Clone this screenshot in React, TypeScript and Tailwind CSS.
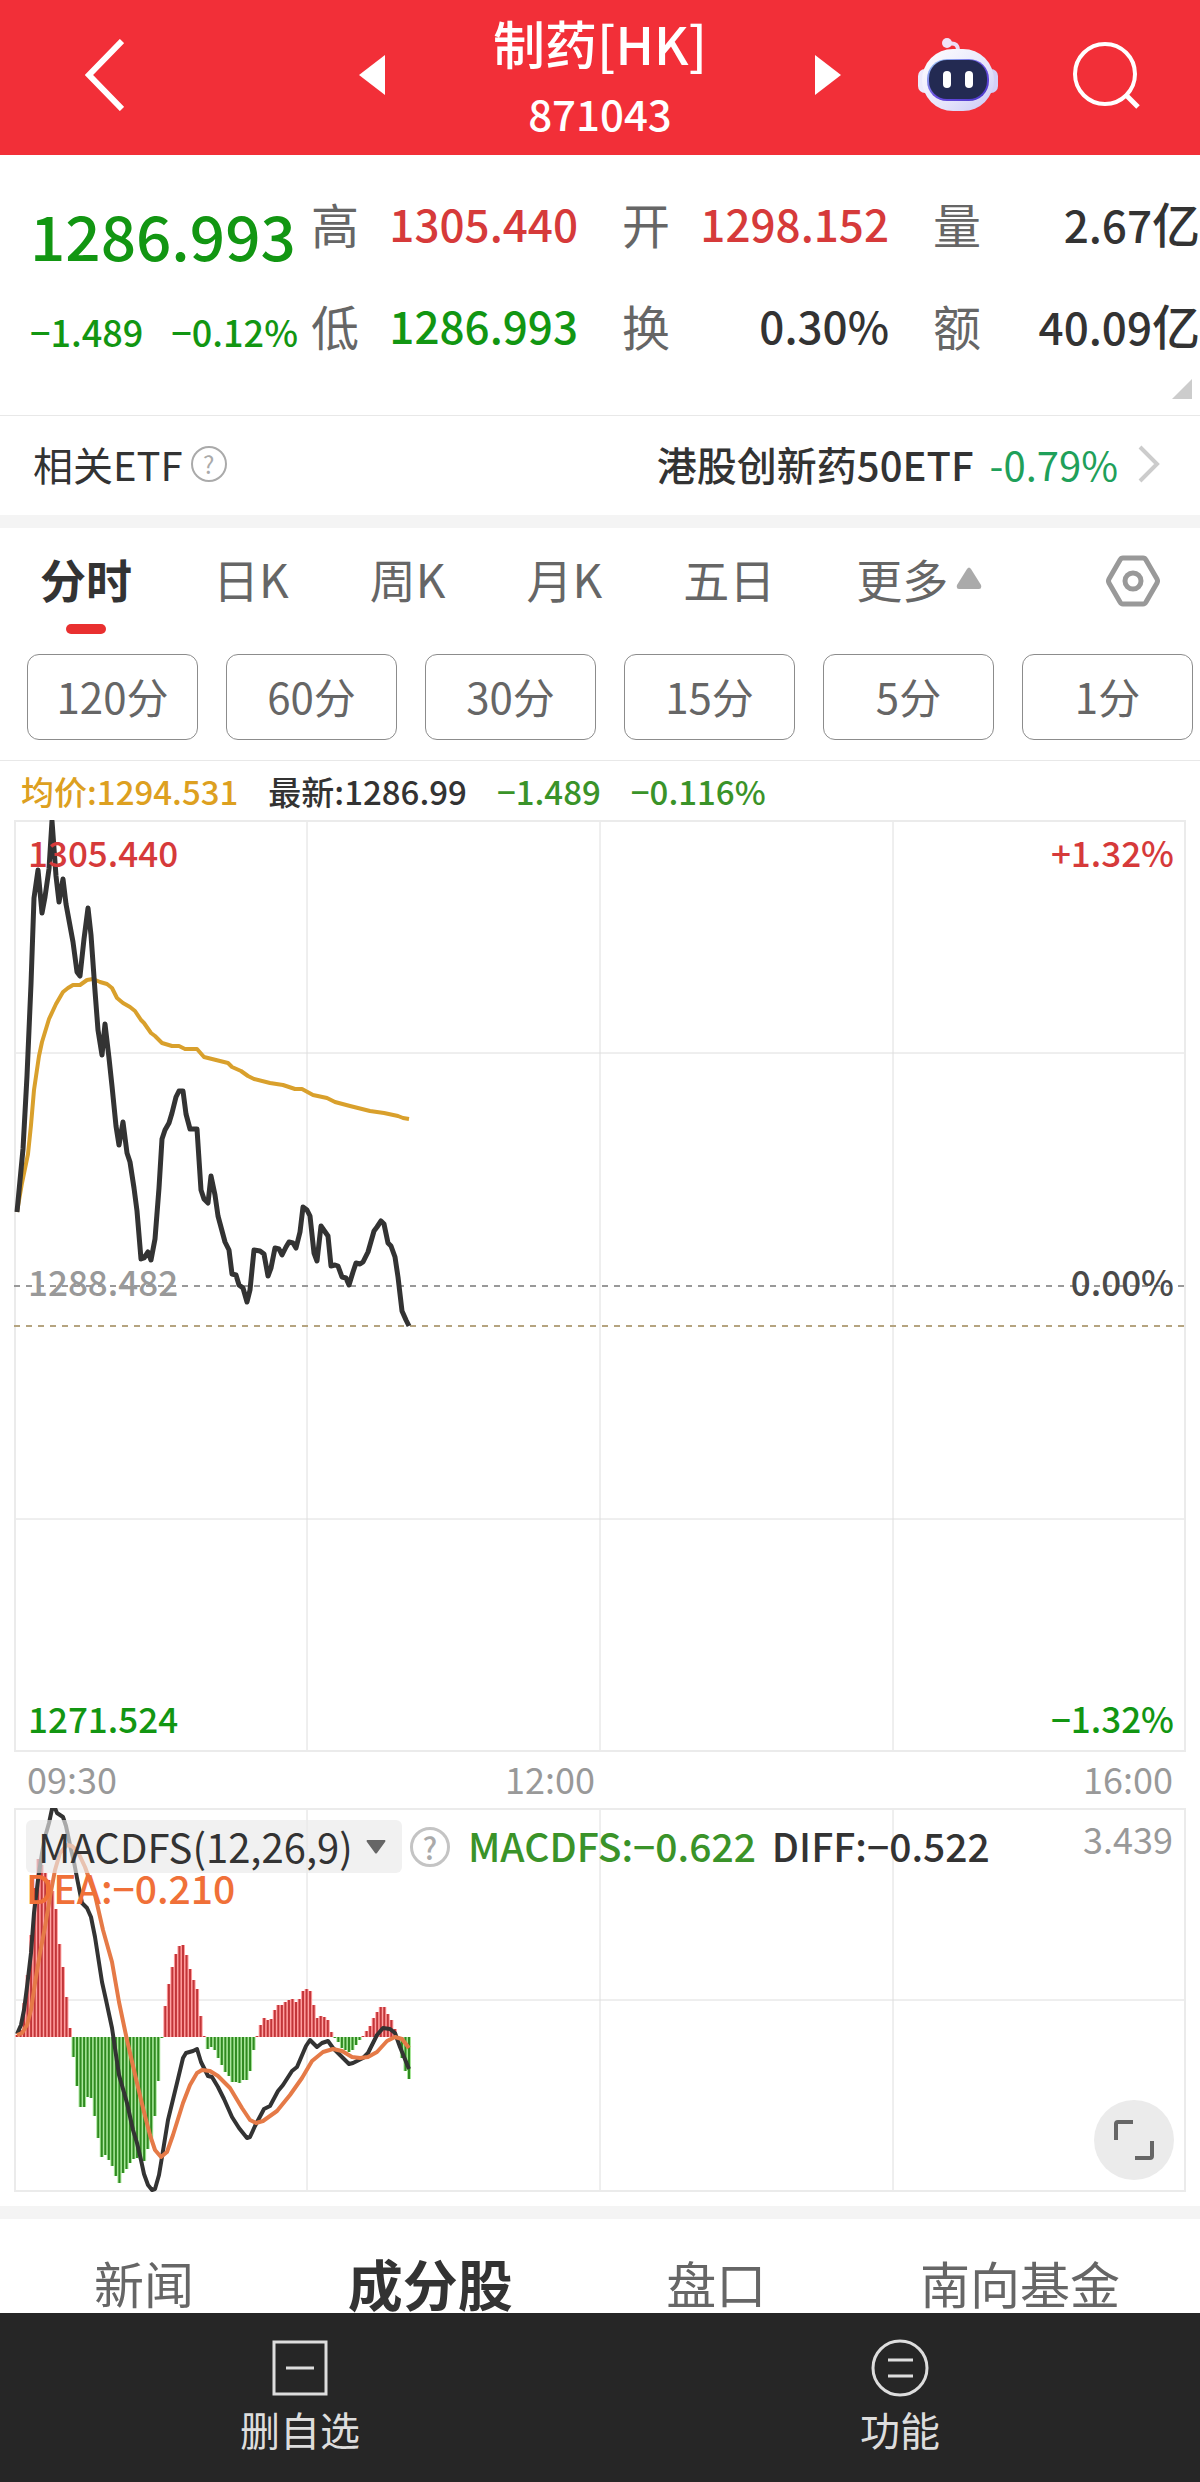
import React, { useState } from 'react'

interface Quote {
    label: string
    value: string
    unit?: string
    color: string
}

const quotes: Quote[] = [
    { label: '高', value: '1305.440', color: 'text-[#d63a3a]' },
    { label: '开', value: '1298.152', color: 'text-[#d63a3a]' },
    { label: '量', value: '2.67', unit: '亿', color: 'text-[#333333]' },
    { label: '低', value: '1286.993', color: 'text-[#129612]' },
    { label: '换', value: '0.30%', color: 'text-[#333333]' },
    { label: '额', value: '40.09', unit: '亿', color: 'text-[#333333]' },
]

const periods = ['分时', '日K', '周K', '月K', '五日']
const minutes = ['120分', '60分', '30分', '15分', '5分', '1分']
const sections = ['新闻', '成分股', '盘口', '南向基金']

// Chart coordinates, 1172 wide for the whole trading day
const priceLine =
    '3,392 9,329 13,256 17,164 20,78 24,50 28,93 31,77 35,49 38,1 42,56 45,82 49,59 52,84 59,122 63,152 66,156 70,119 74,88 77,115 81,171 84,210 88,235 91,204 95,238 98,266 102,306 105,325 109,302 113,333 116,342 120,368 123,391 127,439 130,438 134,432 137,440 141,419 145,368 148,319 151,310 155,303 158,293 162,277 165,271 169,271 172,294 176,309 183,309 187,370 190,379 194,383 197,356 201,375 204,396 211,422 215,430 218,454 222,455 225,465 229,468 233,482 236,470 240,430 246,431 250,434 254,456 257,448 261,428 265,429 268,435 272,427 275,422 279,423 282,428 286,412 289,387 293,390 296,396 300,433 303,441 307,406 314,416 317,446 321,445 324,446 328,457 332,458 335,465 339,452 342,443 346,444 349,442 354,432 360,411 363,407 367,401 370,404 374,423 377,426 381,437 384,457 388,491 392,500 395,506'

const averageLine =
    '3,392 8,363 14,334 17,305 20,270 25,236 28,222 35,199 42,184 49,172 54,168 59,165 66,165 73,160 79,159 86,162 93,164 98,168 103,178 109,183 116,187 121,191 127,200 130,203 137,213 141,216 148,223 158,226 165,226 171,229 183,229 190,237 214,243 218,247 227,251 234,256 240,259 256,263 269,265 281,269 288,269 299,275 313,278 321,282 336,286 356,291 370,293 384,296 389,298 395,299'

const diffLine =
    '3,226 7,217 10,202 13,179 17,145 20,105 24,72 28,45 31,29 35,15 38,1 41,0 43,5 49,9 52,18 56,37 60,54 63,70 68,95 73,100 77,109 81,129 88,174 92,192 98,220 105,267 113,295 119,322 123,335 127,352 130,366 134,377 138,382 141,381 145,367 148,349 154,312 163,275 169,250 172,245 179,243 183,241 187,254 194,268 198,269 204,279 210,291 218,309 225,320 233,330 236,329 241,318 250,301 256,298 264,283 269,277 278,263 283,259 292,238 296,232 303,239 308,235 314,233 319,240 326,247 335,256 339,255 349,250 354,245 363,227 369,220 376,221 381,225 386,239 395,261'

const deaLine =
    '3,227 8,225 13,217 17,202 21,175 26,145 31,119 36,89 41,62 46,45 53,37 58,38 64,44 71,59 81,87 89,122 98,154 105,194 113,232 123,275 130,304 136,327 141,342 147,349 153,344 159,327 169,295 176,277 183,265 188,262 196,263 204,268 216,280 228,300 236,312 242,315 249,313 263,303 276,287 288,270 298,253 309,244 319,241 328,243 338,249 346,250 354,249 363,244 373,233 381,229 388,231 395,240'

// One bar per minute, positive is red and negative is green
const macdBars = [
    2, 7, 34, 62, 102, 149, 178, 172, 164, 157, 146, 128, 93, 70, 40, 9, -20,
    -49, -70, -70, -60, -61, -79, -101, -120, -118, -123, -129, -139, -146,
    -136, -132, -126, -122, -121, -122, -124, -112, -101, -79, -44, -1, 31, 53,
    70, 83, 91, 92, 82, 68, 57, 48, 21, 1, -12, -10, -13, -21, -28, -35, -39,
    -45, -45, -46, -43, -43, -34, -13, 1, 12, 19, 17, 18, 27, 32, 32, 35, 37,
    38, 35, 38, 46, 48, 46, 32, 19, 21, 20, 17, 5, -1, -5, -11, -13, -15, -13,
    -8, -3, 1, 6, 11, 19, 25, 30, 30, 23, 17, 8, -3, -21, -34, -42,
]

const ZERO = 229
const STEP = 392 / (macdBars.length - 1)

const RobotIcon = () => (
    <svg width="80" height="76" viewBox="0 0 80 76" aria-hidden="true">
        <defs>
            <linearGradient id="shell" x1="0" y1="0" x2="1" y2="1">
                <stop offset="0" stopColor="#ffffff" />
                <stop offset="0.6" stopColor="#e6e4fb" />
                <stop offset="1" stopColor="#c9c6f5" />
            </linearGradient>
            <linearGradient id="rim" x1="0" y1="0" x2="1" y2="1">
                <stop offset="0" stopColor="#9fd4f5" />
                <stop offset="0.5" stopColor="#6a4fe0" />
                <stop offset="1" stopColor="#4a36c8" />
            </linearGradient>
        </defs>
        <path d="M30 7Q41 4 40 16" fill="none" stroke="#ecdcf5" strokeWidth="4" />
        <circle cx="29" cy="6" r="5" fill="#f1e2f7" />
        <rect x="0" y="32" width="14" height="24" rx="7" fill="#eceafc" />
        <rect x="66" y="32" width="14" height="24" rx="7" fill="#d3cff7" />
        <rect x="4" y="12" width="72" height="62" rx="31" fill="url(#shell)" />
        <rect x="9" y="22" width="62" height="42" rx="20" fill="url(#rim)" />
        <rect x="11" y="23" width="58" height="39" rx="18" fill="#232a52" />
        <rect x="25" y="34" width="8" height="17" rx="4" fill="#ffffff" />
        <rect x="47" y="34" width="8" height="17" rx="4" fill="#ffffff" />
    </svg>
)

const Help = ({ className }: { className: string }) => (
    <button
        aria-label="帮助"
        className={`flex shrink-0 items-center justify-center rounded-full text-[#aaaaaa] ${className}`}
    >
        ?
    </button>
)

const PriceChart = () => (
    <div className="relative mx-[14px] text-[35px] font-medium leading-10">
        <svg
            viewBox="0 0 1172 932"
            preserveAspectRatio="none"
            className="block h-[932px] w-full"
            aria-label="分时走势"
        >
            <path
                d="M293 0V932M586 0V932M879 0V932M0 233H1172M0 699H1172"
                stroke="#dedede"
            />
            <rect x="1" y="1" width="1170" height="930" fill="none" stroke="#ebebeb" strokeWidth="2" />
            <path d="M0 466H1172" stroke="#999999" strokeWidth="2" strokeDasharray="6 6" />
            <path d="M0 506H1172" stroke="#b5a480" strokeWidth="2" strokeDasharray="6 6" />
            <polyline points={averageLine} fill="none" stroke="#d9a02c" strokeWidth="4" strokeLinejoin="round" />
            <polyline points={priceLine} fill="none" stroke="#333333" strokeWidth="5" strokeLinejoin="round" />
        </svg>
        <div className="absolute inset-0 flex flex-col justify-between pt-3 pr-3 pb-3.5 pl-3.5">
            <div className="flex justify-between">
                <span className="text-[#d63a3a]">1305.440</span>
                <span className="text-[#d63a3a]">+1.32%</span>
            </div>
            <div className="flex justify-between pb-2">
                <span className="text-[#999999]">1288.482</span>
                <span className="text-[#4a4a4a]">0.00%</span>
            </div>
            <div className="flex justify-between text-[#129612]">
                <span>1271.524</span>
                <span>−1.32%</span>
            </div>
        </div>
    </div>
)

const MacdChart = () => (
    <div className="relative mx-[14px]">
        <svg
            viewBox="0 0 1172 384"
            preserveAspectRatio="none"
            className="block h-96 w-full"
            aria-label="MACDFS"
        >
            <path d="M293 0V384M586 0V384M879 0V384M0 192H1172" stroke="#dedede" />
            <rect x="1" y="1" width="1170" height="382" fill="none" stroke="#ebebeb" strokeWidth="2" />
            {macdBars.map((v, i) => {
                const y = v > 0 ? ZERO - v : ZERO
                const x = 3 + i * STEP
                return (
                    <g key={i}>
                        <rect x={x - 2} y={y} width="4" height={Math.abs(v)} fill={v > 0 ? '#ff9c9c' : '#a8e69a'} />
                        <rect x={x - 1} y={y} width="2" height={Math.abs(v)} fill={v > 0 ? '#c23539' : '#2f8a20'} />
                    </g>
                )
            })}
            <polyline points={diffLine} fill="none" stroke="#333333" strokeWidth="4" strokeLinejoin="round" />
            <polyline points={deaLine} fill="none" stroke="#e57a47" strokeWidth="4" strokeLinejoin="round" />
        </svg>
        <div className="absolute inset-x-0 top-3 flex items-start justify-between pr-[13px] pl-3 font-medium">
            <div className="text-[39px] leading-10">
                <div className="flex items-center">
                    <label className="relative flex items-center">
                        <select
                            aria-label="指标"
                            className="h-[53px] w-[376px] appearance-none rounded-md bg-[#e9e9e9]/65 pl-3 text-[40px] leading-[53px] font-normal text-[#333333]"
                        >
                            <option>MACDFS(12,26,9)</option>
                        </select>
                        <svg
                            width="20"
                            height="14"
                            viewBox="0 0 20 14"
                            className="pointer-events-none absolute right-4"
                            aria-hidden="true"
                        >
                            <path d="M1 0H19Q20 1 19 2L11 13Q10 14 9 13L1 2Q0 1 1 0Z" fill="#666666" />
                        </svg>
                    </label>
                    <Help className="mr-[18px] ml-2 size-10 border-3 border-[#c4c4c4] text-3xl" />
                    <span className="mr-4 pb-1 text-[#3a9329]">MACDFS:−0.622</span>
                    <span className="pb-1 text-[#333333]">DIFF:−0.522</span>
                </div>
                <p className="-mt-1.5 text-[#f07038]">DEA:−0.210</p>
            </div>
            <span className="text-4xl leading-9 font-normal text-[#999999]">3.439</span>
        </div>
        <button
            aria-label="全屏"
            className="absolute right-3 bottom-3 flex size-20 items-center justify-center rounded-full bg-[#ebebeb]"
        >
            <svg width="42" height="42" viewBox="0 0 42 42" fill="none" stroke="#666666" strokeWidth="4" aria-hidden="true">
                <path d="M3 21V5Q3 3 5 3H20M22 39H37Q39 39 39 37V22" />
            </svg>
        </button>
    </div>
)

const App = () => {
    const [period, setPeriod] = useState('分时')
    const [section, setSection] = useState('成分股')

    return (
        <div className="overflow-x-hidden bg-white font-['Noto_Sans_CJK_SC',sans-serif] text-[#333333]">
            <header className="flex h-[155px] items-center bg-[#f22f38] pr-[60px] pb-1.5 pl-[85px] text-white">
                <button aria-label="返回" className="mr-[235px] shrink-0">
                    <svg width="39" height="72" viewBox="0 0 39 72" fill="none" stroke="currentColor" strokeWidth="6" aria-hidden="true">
                        <path d="M37 2L4 36L37 70" />
                    </svg>
                </button>
                <button aria-label="上一个" className="shrink-0">
                    <svg width="26" height="40" viewBox="0 0 26 40" fill="currentColor" aria-hidden="true">
                        <path d="M26 0V40L0 20Z" />
                    </svg>
                </button>
                <div className="flex flex-1 flex-col items-center gap-1.5 pt-1.5">
                    <h1 className="text-[52px] leading-[64px] font-medium">制药[HK]</h1>
                    <p className="text-[42px] leading-[64px] font-medium">871043</p>
                </div>
                <button aria-label="下一个" className="mr-[77px] shrink-0">
                    <svg width="26" height="40" viewBox="0 0 26 40" fill="currentColor" aria-hidden="true">
                        <path d="M0 0V40L26 20Z" />
                    </svg>
                </button>
                <button aria-label="助手" className="mr-[74px] shrink-0">
                    <RobotIcon />
                </button>
                <button aria-label="搜索" className="shrink-0">
                    <svg width="68" height="68" viewBox="0 0 68 68" fill="none" stroke="currentColor" strokeWidth="4" aria-hidden="true">
                        <circle cx="33" cy="33" r="30" />
                        <path d="M54 54L66 66" strokeWidth="5" />
                    </svg>
                </button>
            </header>

            <section className="relative flex h-[261px] border-b border-[#e8e8e8] pt-9 font-medium">
                <div className="w-[311px] shrink-0 pl-[30px] text-[#129612]">
                    <p className="text-[62px] leading-[86px]">1286.993</p>
                    <p className="mt-7 flex gap-7 text-4xl leading-[52px] whitespace-nowrap">
                        <span>−1.489</span>
                        <span>−0.12%</span>
                    </p>
                </div>
                <dl className="grid flex-1 grid-cols-3 content-start gap-x-11 gap-y-[38px]">
                    {quotes.map((q) => (
                        <div key={q.label} className="flex h-16 items-center justify-between">
                            <dt className="text-5xl leading-[64px] font-normal text-[#666666]">{q.label}</dt>
                            <dd className={`text-[44px] leading-[64px] whitespace-nowrap ${q.color}`}>
                                {q.value}
                                {q.unit && <span className="text-5xl leading-[64px]">{q.unit}</span>}
                            </dd>
                        </div>
                    ))}
                </dl>
                <svg width="20" height="20" viewBox="0 0 20 20" className="absolute right-2 bottom-4" aria-hidden="true">
                    <path d="M20 0V20H0Z" fill="#cccccc" />
                </svg>
            </section>

            <section className="flex h-[99px] items-center pr-10 pb-1 pl-[33px] text-[40px]">
                <h2>相关ETF</h2>
                <Help className="ml-2 size-9 border-2 border-[#aaaaaa] text-2xl" />
                <a href="#etf" className="ml-auto flex items-center">
                    <span className="font-medium">港股创新药50ETF</span>
                    <span className="ml-4 text-[#1fa05a]">-0.79%</span>
                    <svg width="22" height="38" viewBox="0 0 22 38" fill="none" stroke="#cccccc" strokeWidth="4" className="ml-5" aria-hidden="true">
                        <path d="M2 2L19 19L2 36" />
                    </svg>
                </a>
            </section>
            <div className="h-[13px] bg-[#f4f4f4]" />

            <nav className="flex h-[126px] items-start gap-[81px] pr-10 pl-10 pt-[18px] text-[46px] leading-[64px] text-[#666666]">
                {periods.map((p) => (
                    <button
                        key={p}
                        onClick={() => setPeriod(p)}
                        className={`flex shrink-0 flex-col items-center gap-3.5 ${period === p ? 'font-bold text-[#333333]' : ''}`}
                    >
                        {p}
                        {period === p && <span className="h-2.5 w-10 rounded-full bg-[#e93030]" />}
                    </button>
                ))}
                <button className="flex shrink-0 items-center gap-2">
                    更多
                    <svg width="26" height="22" viewBox="0 0 26 22" aria-hidden="true">
                        <path d="M11 2Q13 -1 15 2L25 18Q26 22 23 22H3Q0 22 1 18Z" fill="#aaaaaa" />
                    </svg>
                </button>
                <button aria-label="设置" className="ml-auto flex h-[70px] shrink-0 items-center">
                    <svg width="54" height="52" viewBox="0 0 54 52" fill="none" stroke="#999999" strokeWidth="5" strokeLinejoin="round" aria-hidden="true">
                        <path d="M17 3H37Q39 3 40 5L51 24Q52 26 51 28L40 47Q39 49 37 49H17Q15 49 14 47L3 28Q2 26 3 24L14 5Q15 3 17 3Z" />
                        <circle cx="27" cy="26" r="8" />
                    </svg>
                </button>
            </nav>

            <div className="grid grid-cols-6 gap-7 border-b border-[#e8e8e8] pr-[7px] pb-5 pl-[27px]">
                {minutes.map((m) => (
                    <button
                        key={m}
                        className="h-[86px] rounded-xl border border-[#8c8c8c] pb-0.5 text-[42px] leading-[64px] text-[#666666]"
                    >
                        {m}
                    </button>
                ))}
            </div>

            <div className="flex h-[59px] items-center gap-[30px] pt-0.5 pl-[21px] text-[33px] font-medium whitespace-nowrap">
                <span className="text-[#dda020]">均价:1294.531</span>
                <span>最新:1286.99</span>
                <span className="text-[#3a9329]">−1.489</span>
                <span className="text-[#3a9329]">−0.116%</span>
            </div>

            <PriceChart />
            <div className="grid h-14 grid-cols-3 items-center px-[27px] pb-1 text-4xl text-[#999999]">
                <span>09:30</span>
                <span className="pl-24">12:00</span>
                <span className="text-right">16:00</span>
            </div>
            <MacdChart />

            <div className="mt-[14px] h-[13px] bg-[#f4f4f4]" />
            <nav className="flex h-[94px] items-start justify-between pt-[31px] pr-20 pl-[94px] leading-[64px]">
                {sections.map((s) => (
                    <button
                        key={s}
                        onClick={() => setSection(s)}
                        className={section === s ? 'text-[55px] font-bold' : 'text-[50px] text-[#666666]'}
                    >
                        {s}
                    </button>
                ))}
            </nav>

            <footer className="grid h-[169px] grid-cols-2 bg-[#262626] text-[40px] leading-[52px] text-[#dddddd]">
                <button className="flex flex-col items-center gap-1.5 pt-[26px]">
                    <svg width="58" height="58" viewBox="0 0 58 58" fill="none" stroke="currentColor" strokeWidth="3" aria-hidden="true">
                        <rect x="3" y="3" width="52" height="52" />
                        <path d="M15 29H43" />
                    </svg>
                    删自选
                </button>
                <button className="flex flex-col items-center gap-1.5 pt-[26px]">
                    <svg width="58" height="58" viewBox="0 0 58 58" fill="none" stroke="currentColor" strokeWidth="3" aria-hidden="true">
                        <circle cx="29" cy="29" r="27" />
                        <path d="M17 21H42M17 37H42" />
                    </svg>
                    功能
                </button>
            </footer>
        </div>
    )
}

export default App
